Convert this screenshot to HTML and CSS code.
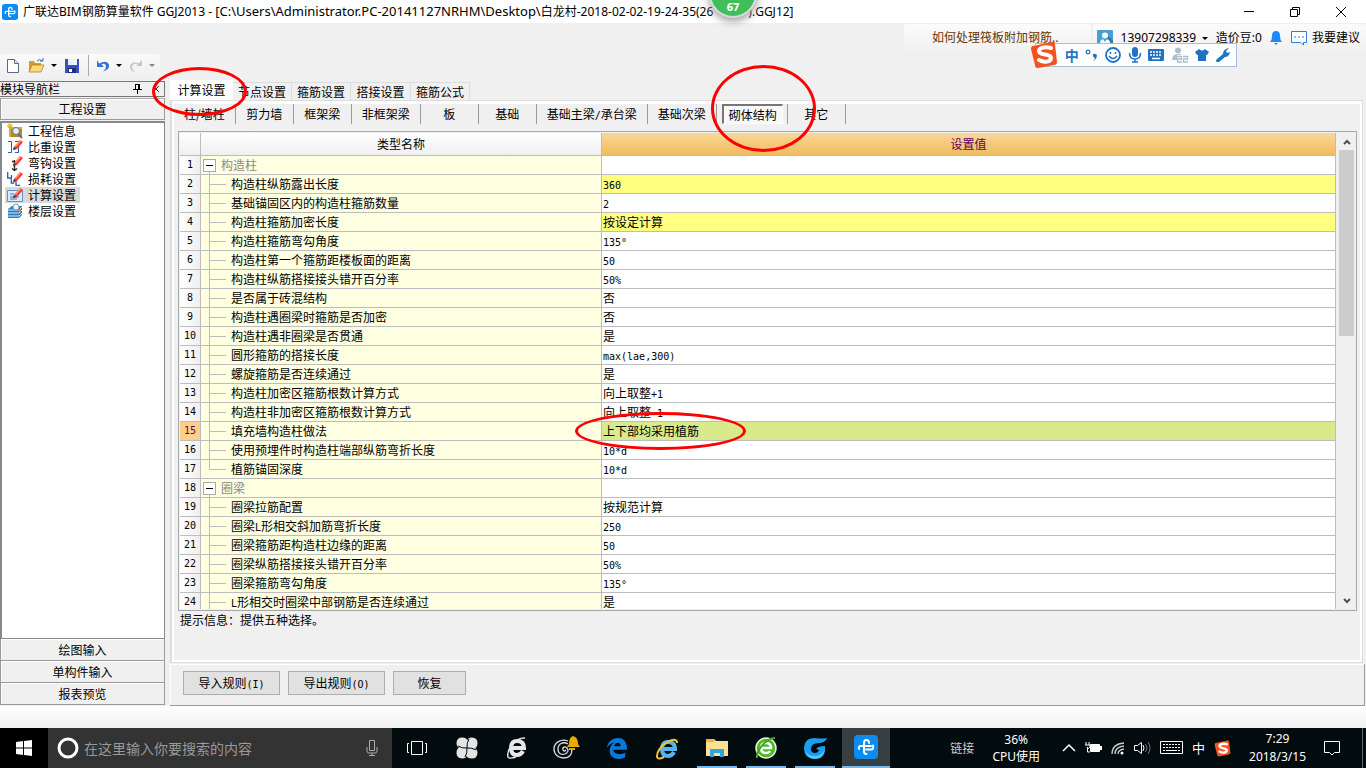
FILE: index.html
```
<!DOCTYPE html>
<html lang="zh-CN">
<head>
<meta charset="utf-8">
<title>广联达BIM钢筋算量软件 GGJ2013</title>
<link rel="stylesheet" href="styles.css">
</head>
<body>
<svg class="defs" aria-hidden="true">
  <defs>
    <symbol id="glodon" viewBox="0 0 24 24"><rect width="24" height="24" rx="4" fill="#0c8cf0"/><path d="M15 8q0-3-2.500-3T10 8v8.500Q10 19 12.500 19M5 14q-1-3 2-3h10M12 14.500h5q3 0 2-4" fill="none" stroke="#fff" stroke-width="2" stroke-linecap="round"/></symbol>
    <symbol id="pencil" viewBox="0 0 16 16"><path d="M7 8l6-7 3 2-6 7-4 1z" fill="#e8432e"/><path d="M8 7l5-6 1 1-5 6z" fill="#ff9c86"/><path d="M6 11l1-3 2 2z" fill="#333"/></symbol>
    <symbol id="sogou" viewBox="0 0 28 28"><path d="M3 5L22 1q3-1 3 2l2 18q0 3-3 3L8 27q-3 0-3-3L1 8q0-3 2-3z" fill="#f4511e"/><path d="M21 7c-6-2-12 0-12 3 0 5 12 2 12 7 0 4-7 5-12 2" fill="none" stroke="#fff" stroke-width="4" stroke-linecap="round"/></symbol>
  </defs>
</svg>

<header class="titlebar">
  <svg class="app-logo"><use href="#glodon"/></svg>
  <h1 class="title">广联达BIM钢筋算量软件 GGJ2013 - <span class="path">[C:\Users\Administrator.PC-20141127NRHM\Desktop\</span>白龙村-2018-02-02-19-24-35(26<i class="title-gap"></i>).GGJ12]</h1>
  <div class="window-buttons">
    <button aria-label="最小化"><svg width="12" height="12" viewBox="0 0 12 12"><path d="M1 5.500h10" stroke="#000"/></svg></button>
    <button aria-label="还原"><svg width="12" height="12" viewBox="0 0 12 12"><path d="M1.500 3.500h7v7h-7zM3.500 3V1.500h7v7H9" fill="none" stroke="#000"/></svg></button>
    <button aria-label="关闭"><svg width="12" height="12" viewBox="0 0 12 12"><path d="M1 1l10 10M11 1L1 11" stroke="#000"/></svg></button>
  </div>
</header>

<div class="account-row">
  <a class="news" href="#">如何处理筏板附加钢筋..</a>
  <div class="account">
    <svg width="16" height="16" viewBox="0 0 16 16"><rect width="16" height="16" rx="1" fill="#4a9fd0"/><path d="M8 3l8 7v6H7z" fill="#2d7fae"/><circle cx="8" cy="5.500" r="3" fill="#fff"/><path d="M3 13q0-4 5-4t5 4z" fill="#fff"/><path d="M6 9l2 3 2-3" fill="#4a9fd0"/></svg>
    <button class="phone">13907298339 <i class="caret"></i></button>
    <span class="beans">造价豆:0</span>
    <svg class="bell" width="14" height="16" viewBox="0 0 14 16"><path d="M7 1q4 0 4 5 0 4 2 6H1q2-2 2-6 0-5 4-5z" fill="#1e88ff"/><path d="M5 13h4l-2 2z" fill="#1e88ff"/></svg>
    <a class="advice" href="#"><svg width="17" height="16" viewBox="0 0 17 16"><path d="M.5 1.500h15v11h-3v2.500l-3-2.500h-9z" fill="#fff" stroke="#2a7fd8"/><path d="M3 7h2M7 7h2M11 7h2" stroke="#2a7fd8"/></svg>我要建议</a>
  </div>
</div>

<div class="toolbar" role="toolbar">
  <button aria-label="新建"><svg width="16" height="16" viewBox="0 0 16 16"><path d="M2.500 1.500h7l4 4v9h-11z" fill="#fff" stroke="#566b8c"/><path d="M9.500 1.500v4h4" fill="#dce7f5" stroke="#566b8c"/></svg></button>
  <button aria-label="打开"><svg width="17" height="16" viewBox="0 0 17 16"><path d="M1 3h5l1 2h6v9H1z" fill="#d69b2f"/><path d="M4 7h12l-3 7H1z" fill="#ffd978" stroke="#a8741e" stroke-width=".7"/><path d="M9 3q3-3 5 0m-2 0h3V0" fill="none" stroke="#4b698f"/></svg><i class="caret"></i></button>
  <button aria-label="保存"><svg width="16" height="16" viewBox="0 0 16 16"><path d="M1 1h14v14H1z" fill="#3c4fc0"/><path d="M4 1h9v6H4z" fill="#eef2ff"/><path d="M4 10h8v5H4z" fill="#1f2c78"/><path d="M5 11h3v3H5z" fill="#fff"/></svg></button>
  <i class="tool-line"></i>
  <button aria-label="撤销"><svg width="14" height="14" viewBox="0 0 14 14"><path d="M1 1v7h7L5.500 5.500q4-2 4.500 2 0 3-3 5 7-2 6-7-2-5-10-1z" fill="#3a73d2"/></svg><i class="caret"></i></button>
  <button aria-label="重做" class="dim"><svg width="14" height="14" viewBox="0 0 14 14"><path d="M13 1v6H7l2-2q-5-1-6 3 0 3 3 5-5-1-5-5 0-6 9-4z" fill="#c4c6c8"/></svg><i class="caret"></i></button>
</div>

<main class="workspace">
  <nav class="sidebar">
    <div class="side-title"><span>模块导航栏</span>
      <button aria-label="固定"><svg width="9" height="10" viewBox="0 0 9 10"><path d="M2.500 0v5.500M5.500 0v5.500M6.500 0v5.500M2 .5h5M0 5.500h9M4.500 5.500V10" stroke="#000" fill="none"/></svg></button>
      <button aria-label="关闭"><svg width="8" height="8" viewBox="0 0 8 8"><path d="M1 1l6 6M7 1L1 7" stroke="#333"/></svg></button>
    </div>
    <button class="side-button">工程设置</button>
    <ul class="side-list">
      <li><a href="#"><svg viewBox="0 0 16 16"><path d="M2 4h13v10H2z" fill="#d9a93f"/><path d="M4 6h11v8H4z" fill="#b98628"/><path d="M3 0v6M0 3h6M1 1l4 4M5 1L1 5" stroke="#e9b100"/><circle cx="9" cy="8" r="3.500" fill="#e3f0ff" stroke="#58749a"/><path d="M11 11l4 4" stroke="#58749a" stroke-width="2"/></svg>工程信息</a></li>
      <li><a href="#"><svg viewBox="0 0 16 16"><path d="M1 2.500h3.500v11H1M8 2.500h3.500v11H8" fill="none" stroke="#2f5cab"/><use href="#pencil"/></svg>比重设置</a></li>
      <li><a href="#"><svg viewBox="0 0 16 16"><path d="M7.500 5v10M5 13.500l2.500 2 2.500-2M5 6.500h3" fill="none" stroke="#222" stroke-width="1.300"/><use href="#pencil"/></svg>弯钩设置</a></li>
      <li><a href="#"><svg viewBox="0 0 16 16"><path d="M.7 1v6h3.600v5h3M4.500 4v3M9 9v5.300h4" fill="none" stroke="#2f5cab" stroke-width="1.300"/><use href="#pencil"/></svg>损耗设置</a></li>
      <li><a href="#" class="current"><svg viewBox="0 0 16 16"><path d="M.5 3.500h15v11H.5z" fill="#d8eafc" stroke="#5a8fc8"/><path d="M3 7h4M3 10h9M3 12h7" stroke="#3f7cc0"/><use href="#pencil"/></svg>计算设置</a></li>
      <li><a href="#"><svg viewBox="0 0 16 16"><path d="M1 6l4-3h10v9l-3 3H1z" fill="#2b7fc2"/><path d="M1 7h11l3-3M1 10h11l3-3M1 13h11l3-3" fill="none" stroke="#cde7fa"/><circle cx="9" cy="4" r="3" fill="#eef4fb" stroke="#8397b0"/><path d="M11 6l3 3" stroke="#c98c5b" stroke-width="2"/></svg>楼层设置</a></li>
    </ul>
    <button class="side-button">绘图输入</button>
    <button class="side-button">单构件输入</button>
    <button class="side-button">报表预览</button>
  </nav>

  <section class="content">
    <div class="tabs" role="tablist">
      <button role="tab" aria-selected="true">计算设置</button>
      <button role="tab">节点设置</button>
      <button role="tab">箍筋设置</button>
      <button role="tab">搭接设置</button>
      <button role="tab">箍筋公式</button>
    </div>
    <div class="pane">
      <div class="subtabs">
        <button>柱/墙柱</button><button>剪力墙</button><button>框架梁</button><button>非框架梁</button><button>板</button><button>基础</button><button>基础主梁<b>/</b>承台梁</button><button>基础次梁</button><button class="pressed"><span>砌体结构</span></button><button>其它</button>
      </div>
      <div class="grid-frame">
        <div class="grid-clip">
        <table class="grid">
          <colgroup><col class="col-no"><col class="col-name"><col></colgroup>
          <thead><tr><th></th><th>类型名称</th><th class="active-col">设置值</th></tr></thead>
          <tbody>
            <tr class="group"><th>1</th><td><button aria-label="折叠"></button>构造柱</td><td></td></tr>
            <tr class="changed"><th>2</th><td>构造柱纵筋露出长度</td><td><b>360</b></td></tr>
            <tr><th>3</th><td>基础锚固区内的构造柱箍筋数量</td><td><b>2</b></td></tr>
            <tr class="changed"><th>4</th><td>构造柱箍筋加密长度</td><td>按设定计算</td></tr>
            <tr><th>5</th><td>构造柱箍筋弯勾角度</td><td><b>135°</b></td></tr>
            <tr><th>6</th><td>构造柱第一个箍筋距楼板面的距离</td><td><b>50</b></td></tr>
            <tr><th>7</th><td>构造柱纵筋搭接接头错开百分率</td><td><b>50%</b></td></tr>
            <tr><th>8</th><td>是否属于砖混结构</td><td>否</td></tr>
            <tr><th>9</th><td>构造柱遇圈梁时箍筋是否加密</td><td>否</td></tr>
            <tr><th>10</th><td>构造柱遇非圈梁是否贯通</td><td>是</td></tr>
            <tr><th>11</th><td>圆形箍筋的搭接长度</td><td><b>max(lae,300)</b></td></tr>
            <tr><th>12</th><td>螺旋箍筋是否连续通过</td><td>是</td></tr>
            <tr><th>13</th><td>构造柱加密区箍筋根数计算方式</td><td>向上取整<b>+1</b></td></tr>
            <tr><th>14</th><td>构造柱非加密区箍筋根数计算方式</td><td>向上取整<b>-1</b></td></tr>
            <tr class="selected"><th>15</th><td>填充墙构造柱做法</td><td>上下部均采用植筋</td></tr>
            <tr><th>16</th><td>使用预埋件时构造柱端部纵筋弯折长度</td><td><b>10*d</b></td></tr>
            <tr class="last"><th>17</th><td>植筋锚固深度</td><td><b>10*d</b></td></tr>
            <tr class="group"><th>18</th><td><button aria-label="折叠"></button>圈梁</td><td></td></tr>
            <tr><th>19</th><td>圈梁拉筋配置</td><td>按规范计算</td></tr>
            <tr><th>20</th><td>圈梁<b>L</b>形相交斜加筋弯折长度</td><td><b>250</b></td></tr>
            <tr><th>21</th><td>圈梁箍筋距构造柱边缘的距离</td><td><b>50</b></td></tr>
            <tr><th>22</th><td>圈梁纵筋搭接接头错开百分率</td><td><b>50%</b></td></tr>
            <tr><th>23</th><td>圈梁箍筋弯勾角度</td><td><b>135°</b></td></tr>
            <tr><th>24</th><td><b>L</b>形相交时圈梁中部钢筋是否连续通过</td><td>是</td></tr>
          </tbody>
        </table>
        </div>
        <div class="scrollbar">
          <button aria-label="向上滚动"><svg width="8" height="6" viewBox="0 0 8 6"><path d="M1 5l3-3 3 3" fill="none" stroke="#505050" stroke-width="2"/></svg></button>
          <div class="track"><div class="thumb"></div></div>
          <button aria-label="向下滚动"><svg width="8" height="6" viewBox="0 0 8 6"><path d="M1 1l3 3 3-3" fill="none" stroke="#505050" stroke-width="2"/></svg></button>
        </div>
      </div>
      <p class="hint">提示信息：提供五种选择。</p>
    </div>
    <div class="actions">
      <button>导入规则<b>(I)</b></button>
      <button>导出规则<b>(O)</b></button>
      <button class="narrow">恢复</button>
    </div>
  </section>
</main>

<footer class="taskbar">
  <button class="start" aria-label="开始"><svg width="16" height="16" viewBox="0 0 16 16"><path d="M0 2l7-1v6.500H0zM8 1l8-1v7.500H8zM0 8.500h7V15l-7-1zM8 8.500h8V16l-8-1z" fill="#fff"/></svg></button>
  <label class="search">
    <svg width="22" height="22" viewBox="0 0 22 22"><circle cx="11" cy="11" r="9" fill="none" stroke="#fff" stroke-width="3"/></svg>
    <input type="text" placeholder="在这里输入你要搜索的内容" aria-label="搜索">
    <svg width="12" height="16" viewBox="0 0 12 16"><path d="M3.500.5h5v10h-5zM1 7v4q0 2 2 2h6q2 0 2-2V7M6 13v2.500M3 15.500h6" fill="none" stroke="#aaa"/></svg>
  </label>
  <div class="apps">
    <button aria-label="任务视图"><svg width="22" height="16" viewBox="0 0 22 16"><path d="M5.500 1.500h11v13h-11zM3 3.500H1.500v9H3M19 3.500h1.500v9H19" fill="none" stroke="#fff"/></svg></button>
    <button aria-label="风扇"><svg width="22" height="22" viewBox="0 0 22 22"><g fill="#e4e4e4"><path id="petal" d="M11 11H5Q.5 11 .5 6 .8.500 6 .5q5.500 0 6 4.500-1 2-1 6z"/><use href="#petal" transform="rotate(90 11 11)"/><use href="#petal" transform="rotate(180 11 11)"/><use href="#petal" transform="rotate(270 11 11)"/></g><path d="M11 11q-.5-5 2-9M11 11q5-.5 9 2M11 11q.5 5-2 9M11 11q-5 .5-9-2" fill="none" stroke="#020b0e"/></svg></button>
    <button aria-label="浏览器"><svg width="24" height="24" viewBox="0 0 24 24"><path d="M6 12h13q0-7-7-7-6 0-6 7t6 7q4 0 6-4" fill="none" stroke="#e8e8e8" stroke-width="4"/><path d="M20 2C12 1 1 13 3 21c1 2 5 1 8 0" fill="none" stroke="#e8e8e8" stroke-width="1.500"/></svg></button>
    <button aria-label="提醒"><svg width="28" height="26" viewBox="0 0 28 26"><path d="M15 6C8 3 1 8 1 14s5 9 10 9 8-3 8-9h-3M15 9C10 6 5 9 5 14s4 6 7 5 4-4 2-6-5-1-4 2q1 2 3 0" fill="none" stroke="#ddd" stroke-width="1.300"/><path d="M20 1q5 1 5 8l2 3H14l2-3q0-7 4-8zM18 13h4v2h-4z" fill="#e8aa00"/></svg></button>
    <button aria-label="Edge"><svg width="22" height="22" viewBox="0 0 24 24"><path d="M1 12C2 5 7 1 13 1c7 0 10 5 10 13H8c0 5 8 6 13 3v5C14 26 4 24 4 15c0-4 2-7 5-9-4 1-6 3-8 6zm8-2h7c0-5-6-5-7 0z" fill="#0a78d7"/></svg></button>
    <button aria-label="IE"><svg width="24" height="24" viewBox="0 0 24 24"><path d="M7 13h13q0-7-7-7-6 0-6 7t6 7q4 0 6-4" fill="none" stroke="#55b5ee" stroke-width="4"/><path d="M22 7C22-2 1 10 2 21c1 3 5 1 7 0" fill="none" stroke="#f2c630" stroke-width="2"/></svg></button>
    <button class="open" aria-label="文件资源管理器"><svg width="22" height="20" viewBox="0 0 22 20"><path d="M0 1h8l2 2h12v15H0z" fill="#ffe291"/><path d="M0 1h8v3H0z" fill="#efb73b"/><path d="M4 11h14v8h-4v-4H8v4H4z" fill="#34a5dc"/></svg></button>
    <button class="open" aria-label="安全浏览器"><svg width="24" height="24" viewBox="0 0 24 24"><circle cx="12" cy="12" r="10" fill="#4fb827" stroke="#e7f7da" stroke-width="1.500"/><path d="M8 12h9q0-5-5-5t-5 5 5 5q3 0 4-2" fill="none" stroke="#fff" stroke-width="2.500"/><path d="M21 2C12 2 2 15 3 22" fill="none" stroke="#45a51d" stroke-width="2"/></svg></button>
    <button class="open" aria-label="广联达G"><svg width="24" height="24" viewBox="0 0 24 24"><path d="M24 2q-2 5-8 5-8 0-8 6 0 4 4 4 3 0 4-3l-3-1q2-3 9-3 1 13-10 13Q1 22 1 13 1 2 12 2q6 1 12 0z" fill="#1b9df2"/><path d="M2 15q2 8 10 8 9-1 10-10-3 7-10 7-7 0-10-5z" fill="#55c7ff"/></svg></button>
    <button class="open active" aria-label="广联达算量"><svg width="24" height="24"><use href="#glodon"/></svg></button>
  </div>
  <div class="tray">
    <span class="links">链接</span>
    <span class="cpu">36%<br>CPU使用</span>
    <svg width="14" height="10" viewBox="0 0 14 10"><path d="M1 8l6-6 6 6" fill="none" stroke="#fff" stroke-width="1.500"/></svg>
    <svg width="17" height="14" viewBox="0 0 17 14"><path d="M5.500 3.500h9v7h-9z" fill="#fff" stroke="#fff"/><path d="M15 5h2v4h-2z" fill="#fff"/><path d="M1 1v3M4 1v3M0 4h5v2q-2 3-3 0M2.500 7v4H5" fill="none" stroke="#fff"/></svg>
    <svg width="14" height="14" viewBox="0 0 14 14"><path d="M1 13Q1 3 13 2M4 13Q4 6 13 5M7 13Q7 9 13 8" fill="none" stroke="#ccc" stroke-width="1.300"/><circle cx="11" cy="12" r="1.500" fill="#fff"/></svg>
    <svg width="17" height="14" viewBox="0 0 17 14"><path d="M.5 4.500h3l4-3v11l-4-3h-3z" fill="none" stroke="#fff"/><path d="M9 4q2 3 0 6" fill="none" stroke="#fff"/><path d="M11.500 3q3 4 0 8M14 1q4 6 0 12" fill="none" stroke="#777"/></svg>
    <svg width="23" height="14" viewBox="0 0 23 14"><path d="M.5.500h22v12H.5z" fill="none" stroke="#fff"/><path d="M3 3.500h17M3 6.500h17" stroke="#fff" stroke-dasharray="2 1"/><path d="M3 9.500h2M6 9.500h11M18 9.500h2" stroke="#fff"/></svg>
    <span class="ime">中</span>
    <svg width="17" height="17"><use href="#sogou"/></svg>
    <span class="clock">7:29<br>2018/3/15</span>
    <button aria-label="通知"><svg width="17" height="17" viewBox="0 0 17 17"><path d="M.5 1.500h15v11h-5L8 15l-2.500-2.500h-5z" fill="none" stroke="#fff"/></svg></button>
  </div>
  <button class="show-desktop" aria-label="显示桌面"></button>
</footer>

<div class="ball">67</div>

<div class="ime-bar">
  <svg class="ime-logo" width="28" height="28"><use href="#sogou"/></svg>
  <b>中</b>
  <svg width="13" height="14" viewBox="0 0 13 14"><circle cx="3" cy="4" r="1.800" fill="none" stroke="#1f73c4" stroke-width="1.300"/><path d="M8 6q4-1 4 2-1 4-4 5 2-2 2-3-2 0-2-4z" fill="#1f73c4"/></svg>
  <svg width="16" height="16" viewBox="0 0 16 16"><circle cx="8" cy="8" r="7" fill="none" stroke="#1f73c4" stroke-width="1.800"/><path d="M5.500 5v2M10.500 5v2M4 9q4 5 8 0" fill="none" stroke="#1f73c4" stroke-width="1.500"/></svg>
  <svg width="14" height="16" viewBox="0 0 14 16"><rect x="4" y="0" width="6" height="10" rx="3" fill="#1f73c4"/><path d="M1.500 6q0 6 5.500 6t5.500-6M7 12v3M4 15h6" fill="none" stroke="#1f73c4" stroke-width="1.500"/></svg>
  <svg width="16" height="12" viewBox="0 0 16 12"><rect width="16" height="12" rx="1" fill="#1f73c4"/><path d="M2 3h12M2 6h12" stroke="#fff" stroke-width="1.500" stroke-dasharray="2 1"/><path d="M4 9.500h8" stroke="#fff" stroke-width="1.500"/></svg>
  <svg width="18" height="16" viewBox="0 0 18 16"><circle cx="7" cy="3.500" r="3" fill="#aebdd0"/><path d="M1 13q0-6 6-6 3 0 4 1H6v5z" fill="#aebdd0"/><path d="M6 9.500h4.500v2.500H6.500v3h4.500M12 9.500h4.500v2.500h-4v3h4.500" fill="none" stroke="#aebdd0" stroke-width="1.300"/></svg>
  <svg width="14" height="14" viewBox="0 0 14 14"><path d="M4 1q3 3 6 0l4 3-2 3h-1v6H3V7H2L0 4z" fill="#1f73c4"/></svg>
  <svg width="15" height="14" viewBox="0 0 15 14"><path d="M0 12l7-6q0-5 6-6l-3 3 1 2 3-1q-1 5-5 5l-6 5q-3 1-3-2z" fill="#1f73c4"/></svg>
</div>

<i class="mark mark-tab"></i>
<i class="mark mark-subtab"></i>
<i class="mark mark-row"></i>
</body>
</html>
```
FILE: styles.css
```
* { box-sizing: border-box; }
body {
  margin: 0;
  height: 100vh;
  display: flex;
  flex-direction: column;
  position: relative;
  overflow: hidden;
  background: #f0f0f0;
  color: #000;
  font: 12px/16px "Noto Sans CJK SC", sans-serif;
}
button {
  font: inherit;
  color: inherit;
  border: 0;
  padding: 0;
  background: none;
  white-space: nowrap;
}
a { color: inherit; text-decoration: none; }
b { font-weight: normal; }
svg { flex: none; display: block; }
.defs { position: absolute; width: 0; height: 0; }
.caret {
  border: 3px solid transparent;
  border-top-color: currentColor;
  border-bottom: 0;
}

.titlebar {
  height: 23px;
  flex: none;
  display: flex;
  align-items: center;
  background: #fff;
}
.app-logo { width: 16px; height: 16px; margin: 0 5px 0 2px; }
.title {
  flex: 1;
  margin: 0;
  font: 12px/22px "Noto Sans", "Noto Sans CJK SC", sans-serif;
  white-space: nowrap;
}
.path { font-size: 13px; }
.title-gap { display: inline-block; width: 35px; }
.window-buttons { display: flex; padding-right: 2px; }
.window-buttons button {
  width: 46px;
  height: 20px;
  display: flex;
  align-items: center;
  justify-content: center;
}

.account-row {
  height: 31px;
  flex: none;
  display: flex;
  justify-content: flex-end;
  align-items: stretch;
  gap: 2px;
  padding-top: 1px;
  font-family: "Noto Sans", "Noto Sans CJK SC", sans-serif;
}
.news, .account {
  background: linear-gradient(#fbfbfb, #f0f0f0);
  border-radius: 3px 3px 0 0;
}
.news { width: 187px; padding: 6px 0 0 28px; color: #663300; }
.account {
  width: 273px;
  padding: 4px 6px 6px 4px;
  display: flex;
  align-items: center;
  justify-content: space-between;
}
.phone, .advice { display: flex; align-items: center; gap: 6px; }
.advice { gap: 4px; }

.toolbar {
  width: 160px;
  height: 23px;
  flex: none;
  display: flex;
  align-items: center;
  justify-content: space-between;
  padding: 0 5px;
  border-radius: 3px;
  background: linear-gradient(#fafafa, #f0f0f0);
}
.toolbar button { display: flex; align-items: center; gap: 6px; }
.toolbar .dim { color: #888; }
.tool-line { width: 1px; height: 21px; background: #aaa; }

.workspace {
  flex: 1;
  min-height: 0;
  display: flex;
  gap: 5px;
  padding: 3px 0 22px;
  background: linear-gradient(#fff, #f0f0f0) bottom / 100% 22px no-repeat;
}

.sidebar {
  width: 165px;
  flex: none;
  display: flex;
  flex-direction: column;
  margin: 1px 0;
}
.side-title {
  height: 16px;
  display: flex;
  align-items: center;
  gap: 10px;
  margin-bottom: 1px;
  padding-right: 4px;
  border: solid #777;
  border-width: 1px 1px 1px 0;
  line-height: 14px;
}
.side-title span { flex: 1; }
.side-button {
  height: 22px;
  border: 1px solid #999;
  border-top-color: #aaa;
  box-shadow: inset 1px 1px #fff;
}
.side-list ~ .side-button { border-top: 0; }
.side-list {
  flex: 1;
  margin: 1px 0 0;
  padding: 0 3px;
  list-style: none;
  background: #fff;
  border: 2px solid #85888c;
  border-width: 2px 1px 1px 2px;
}
.side-list a {
  width: 75px;
  height: 16px;
  display: flex;
  align-items: center;
  gap: 5px;
  padding-left: 2px;
  white-space: nowrap;
}
.side-list svg { width: 16px; height: 16px; }
.side-list .current { background: #d9d9d9; }

.content {
  flex: 1;
  min-width: 0;
  display: flex;
  flex-direction: column;
}
.tabs { height: 20px; flex: none; display: flex; align-items: flex-end; }
.tabs button {
  width: 59px;
  height: 18px;
  border: 1px solid #dcdcdc;
  border-width: 1px 1px 0 0;
}
.tabs button:nth-child(4) { width: 60px; }
.tabs [aria-selected] {
  width: 63px;
  height: 20px;
  background: #fff;
  border: 0;
}
.pane {
  flex: 1;
  min-height: 0;
  display: flex;
  flex-direction: column;
  margin-right: 3px;
  padding: 0 4px 0 5px;
  border: 1px solid #dcdcdc;
  border-left-width: 2px;
  box-shadow: inset 2px 3px #fff, inset -2px -2px #fff;
}
.subtabs { height: 30px; flex: none; display: flex; padding-top: 3px; margin-left: -3px; }
.subtabs button {
  min-width: 58px;
  height: 20px;
  padding: 0 10px;
  border-right: 1px solid #999;
}
.subtabs .pressed { padding: 0 4px 0 5px; }
.pressed span {
  display: block;
  height: 20px;
  line-height: 18px;
  padding: 0 5px;
  border: 1px solid #fff;
  border-top: 2px solid #777;
  border-left: 2px solid #777;
  background: #f8f8f8;
}

.grid-frame {
  flex: 1;
  min-height: 0;
  display: flex;
  gap: 2px;
  padding: 1px;
  margin-left: 1px;
  margin-right: 1px;
  border: 1px solid #a5a8ae;
}
.grid-clip { flex: 1; min-width: 0; overflow: hidden; }
.grid {
  width: 100%;
  table-layout: fixed;
  border-collapse: separate;
  border-spacing: 0;
}
.col-no { width: 21px; }
.col-name { width: 401px; }
.grid th, .grid td {
  height: 19px;
  padding: 0 1px;
  border: solid #bdbdbd;
  border-width: 0 1px 1px 0;
  line-height: 18px;
  font-weight: normal;
  text-align: left;
  white-space: nowrap;
  background: #fff;
}
.grid thead th {
  height: 23px;
  text-align: center;
  background: linear-gradient(#fff, #efefef);
}
.grid thead .active-col {
  color: #600060;
  background: linear-gradient(#fad79c, #f0bb5c);
}
b, .grid tbody th { font-family: "DejaVu Sans Mono", monospace; font-size: 10px; }
.grid b, .actions b, .subtabs b { line-height: 10px; }
.grid tbody th { text-align: center; background: linear-gradient(90deg, #fff, #efefef); }
.grid tbody td:nth-child(2) {
  padding-left: 30px;
  background:
    linear-gradient(#bdbdbd, #bdbdbd) 8px 0 / 1px 100% no-repeat,
    linear-gradient(#bdbdbd, #bdbdbd) 8px 9px / 17px 1px no-repeat,
    #ffffe1;
}
.grid .last td:nth-child(2) { background-size: 1px 9px, 17px 1px, auto; }
.grid .group td:nth-child(2) {
  padding-left: 2px;
  color: #888;
  background: linear-gradient(#bdbdbd, #bdbdbd) 8px 16px / 1px 3px no-repeat, #ffffe1;
}
.group button {
  width: 13px;
  height: 13px;
  margin-right: 5px;
  vertical-align: -1px;
  border: 1px solid #aaa;
  background: linear-gradient(#000, #000) center / 7px 1px no-repeat, #fff;
}
.grid .changed td:nth-child(3) { background: #ffff80; }
.grid .selected td:nth-child(3) { background: #d9ea8c; }
.grid .selected th { color: #600060; background: #fdd08a; }

.scrollbar { width: 17px; display: flex; flex-direction: column; }
.scrollbar button {
  height: 17px;
  display: flex;
  align-items: center;
  justify-content: center;
}
.track { flex: 1; }
.thumb { width: 15px; height: 42%; margin-left: 1px; background: #cdcdcd; }
.hint { height: 51px; margin: 0 0 0 3px; line-height: 18px; }

.actions {
  height: 42px;
  flex: none;
  display: flex;
  gap: 8px;
  padding: 7px 13px;
  margin-top: 1px;
  margin-right: 1px;
  border: solid #999;
  border-width: 0 1px 1px 0;
  box-shadow: inset 1px 1px #fff;
}
.actions button {
  width: 97px;
  height: 24px;
  border: 1px solid #adadad;
  background: #e1e1e1;
}
.actions .narrow { width: 73px; }

.taskbar {
  height: 40px;
  flex: none;
  display: flex;
  background: #020b0e;
  color: #fff;
}
.taskbar button { display: flex; align-items: center; justify-content: center; }
.start { width: 48px; background: #000; }
.search {
  width: 344px;
  display: flex;
  align-items: center;
  gap: 5px;
  padding: 0 14px 0 9px;
  background: #333;
}
.search input {
  flex: 1;
  min-width: 0;
  padding: 0;
  border: 0;
  background: none;
  color: #fff;
  font: 14px/20px "Noto Sans CJK SC", sans-serif;
}
.search input::placeholder { color: #999; }
.apps { display: flex; }
.apps button { width: 50px; }
.apps .open {
  width: 40px;
  margin: 0 4px 0 5px;
  border-top: 2px solid transparent;
  border-bottom: 2px solid #76b9ed;
}
.apps .active { width: 48px; margin: 0 2px 0 3px; background: #373f42; border-top: 0; }
.tray {
  flex: 1;
  display: flex;
  align-items: center;
  justify-content: flex-end;
  gap: 9px;
  padding-right: 21px;
  font: 12px/17px "Noto Sans", "Noto Sans CJK SC", sans-serif;
}
.links { margin-right: 9px; color: #ccc; }
.cpu, .clock { text-align: center; }
.cpu { margin-right: 13px; }
.ime { font-size: 13px; }
.clock { margin: 0 9px; line-height: 18px; }
.show-desktop { width: 4px; border-left: 1px solid #666; }

.ball {
  position: absolute;
  left: 709px;
  top: -30px;
  width: 48px;
  height: 48px;
  border-radius: 50%;
  border: 2px solid #d5dcd5;
  background: #3fbf5b;
  box-shadow: 0 3px 8px #999;
  color: #fff;
  font: bold 11px/70px "Noto Sans", sans-serif;
  text-align: center;
}
.ime-bar {
  position: absolute;
  right: 129px;
  top: 43px;
  width: 202px;
  height: 24px;
  display: flex;
  align-items: center;
  justify-content: space-between;
  padding: 0 5px 0 0;
  background: #fff;
  border: 1px solid #a9bdd6;
  color: #1f73c4;
}
.ime-bar b { font: bold 14px/20px "Noto Sans CJK SC", sans-serif; }
.ime-logo { margin: 0 0 0 -6px; }

.mark {
  position: absolute;
  border: 3px solid #f00;
  border-radius: 50%;
}
.mark-tab { left: 152px; top: 67px; width: 95px; height: 49px; }
.mark-subtab { left: 711px; top: 65px; width: 105px; height: 87px; }
.mark-row { left: 575px; top: 412px; width: 171px; height: 38px; }
```
